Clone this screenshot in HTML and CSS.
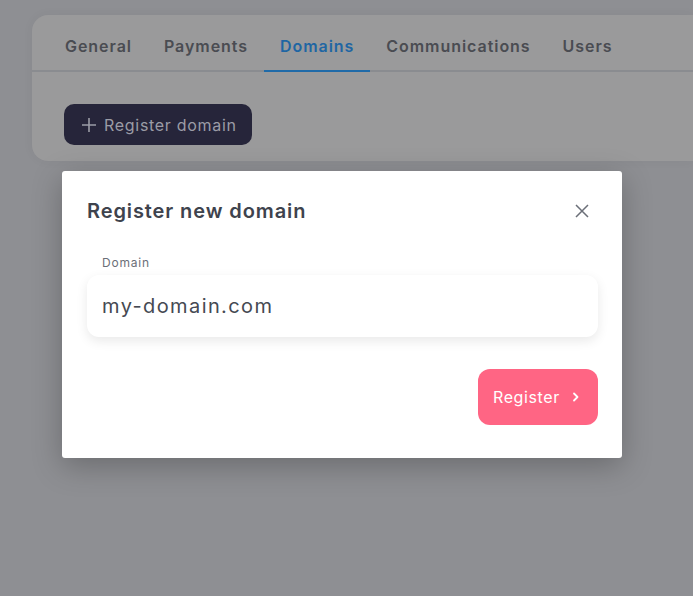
FILE: index.html
```html
<!DOCTYPE html>
<html lang="en">
<head>
<meta charset="utf-8">
<title>Domains</title>
<link rel="stylesheet" href="styles.css">
</head>
<body>
<div class="page">
  <section class="card">
    <nav class="tabs">
      <a class="tab">General</a>
      <a class="tab">Payments</a>
      <a class="tab active">Domains</a>
      <a class="tab">Communications</a>
      <a class="tab">Users</a>
    </nav>
    <div class="card-body">
      <button class="btn-dark">
        <svg width="16" height="16" viewBox="0 0 16 16"><path d="M8 1v14M1 8h14" stroke="currentColor" stroke-width="1.6" fill="none"/></svg>
        Register domain
      </button>
    </div>
  </section>
</div>

<div class="modal">
  <div class="modal-head">
    <h2 class="modal-title">Register new domain</h2>
    <button class="close" aria-label="Close">
      <svg width="14" height="14" viewBox="0 0 14 14"><path d="M1 1l12 12M13 1L1 13" stroke="currentColor" stroke-width="1.5" fill="none"/></svg>
    </button>
  </div>
  <label class="field-label">Domain</label>
  <div class="field">my-domain.com</div>
  <div class="modal-foot">
    <button class="btn-pink">Register
      <svg width="10" height="10" viewBox="0 0 10 10"><path d="M3 1.5L6.5 5 3 8.5" stroke="currentColor" stroke-width="1.8" fill="none" stroke-linecap="round" stroke-linejoin="round"/></svg>
    </button>
  </div>
</div>
</body>
</html>
```
FILE: styles.css
```css
* { box-sizing: border-box; }
html, body { margin: 0; padding: 0; }
body {
  background: #8e8f93;
  font-family: Inter, "Noto Sans", sans-serif;
  width: 693px;
  height: 596px;
  overflow: hidden;
  position: relative;
}
.page {
  padding: 15px 0 0 32px;
}
.card {
  background: #9a9a9b;
  border-radius: 16px 0 0 16px;
  height: 146px;
  box-shadow: 0 0 12px rgba(0,0,0,0.04);
}
.tabs {
  display: flex;
  padding: 0 0 0 17px;
  border-bottom: 2px solid #8a8c90;
  height: 57px;
  align-items: stretch;
}
.tab {
  display: flex;
  align-items: center;
  padding: 7px 16px 0;
  font-size: 16px;
  font-weight: 600;
  color: #4a4c52;
  letter-spacing: 0.95px;
  margin-bottom: -2px;
  border-bottom: 2px solid transparent;
}
.tab.active {
  color: #1f66a3;
  border-bottom-color: #1f6aa8;
}
.card-body {
  padding: 32px 0 0 32px;
}
.btn-dark {
  display: inline-flex;
  align-items: center;
  gap: 7px;
  height: 41px;
  padding: 0 15px 0 17px;
  border: 0;
  border-radius: 10px;
  background: #26253a;
  color: #9b9ca6;
  font-family: inherit;
  font-size: 16px;
  font-weight: 400;
  letter-spacing: 0.7px;
}
.modal {
  position: absolute;
  left: 62px;
  top: 171px;
  width: 560px;
  height: 287px;
  background: #fff;
  border-radius: 3px;
  box-shadow: 0 8px 30px rgba(0,0,0,0.25);
  padding: 24px 24px 0 25px;
}
.modal-head {
  display: flex;
  justify-content: space-between;
  align-items: center;
  height: 32px;
}
.modal-title {
  margin: 0;
  font-size: 20px;
  font-weight: 600;
  color: #3e434d;
  letter-spacing: 0.9px;
}
.close {
  border: 0;
  background: none;
  padding: 0;
  width: 14px;
  height: 14px;
  color: #6b6f78;
  margin-right: 9px;
  display: flex;
}
.field-label {
  display: block;
  margin: 28px 0 0 15px;
  font-size: 12px;
  color: #6b6f78;
  line-height: 16px;
  letter-spacing: 0.8px;
}
.field {
  margin-top: 4px;
  width: 511px;
  height: 62px;
  border-radius: 12px;
  background: #fff;
  box-shadow: 0 4px 12px rgba(0,0,0,0.09);
  padding: 0 15px;
  display: flex;
  align-items: center;
  font-size: 20px;
  color: #454952;
  letter-spacing: 1.4px;
}
.modal-foot {
  display: flex;
  justify-content: flex-end;
  width: 511px;
  margin-top: 32px;
}
.btn-pink {
  display: inline-flex;
  align-items: center;
  gap: 11px;
  height: 56px;
  width: 120px;
  padding: 0 0 0 15px;
  border: 0;
  border-radius: 12px;
  background: #ff6584;
  color: #fff;
  font-family: inherit;
  font-size: 16px;
  letter-spacing: 0.6px;
}
```
